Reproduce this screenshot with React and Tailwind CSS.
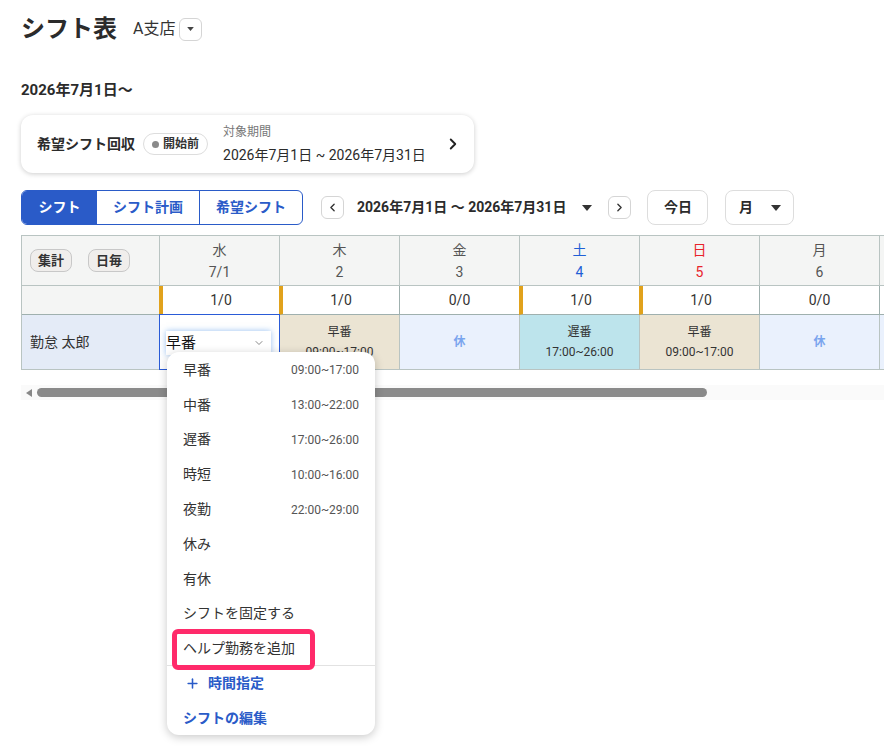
import { ChevronDown, ChevronLeft, ChevronRight, Plus } from "lucide-react"

const days = [
  { w: "水", d: "7/1", color: "text-[#555]", count: "1/0", bar: true },
  { w: "木", d: "2", color: "text-[#555]", count: "1/0", bar: true },
  { w: "金", d: "3", color: "text-[#555]", count: "0/0", bar: false },
  { w: "土", d: "4", color: "text-[#1f5fd6]", count: "1/0", bar: true },
  { w: "日", d: "5", color: "text-[#e8232a]", count: "1/0", bar: true },
  { w: "月", d: "6", color: "text-[#555]", count: "0/0", bar: false },
  // next column is only partly in view, its text lies past the edge
  { w: "", d: "", color: "text-[#555]", count: "", bar: false },
]

const shifts = [
  { type: "select" },
  { type: "shift", name: "早番", time: "09:00~17:00", bg: "bg-[#ebe4d3]" },
  { type: "off" },
  { type: "shift", name: "遅番", time: "17:00~26:00", bg: "bg-[#bde4ec]" },
  { type: "shift", name: "早番", time: "09:00~17:00", bg: "bg-[#ebe4d3]" },
  { type: "off" },
  { type: "blank" },
]

const menuItems = [
  { name: "早番", time: "09:00~17:00" },
  { name: "中番", time: "13:00~22:00" },
  { name: "遅番", time: "17:00~26:00" },
  { name: "時短", time: "10:00~16:00" },
  { name: "夜勤", time: "22:00~29:00" },
  { name: "休み" },
  { name: "有休" },
  { name: "シフトを固定する" },
]

function Caret() {
  return (
    <svg width="10" height="6" viewBox="0 0 10 6" className="fill-[#333]">
      <path d="M0 0h10L5 6z" />
    </svg>
  )
}

export default function App() {
  return (
    <div
      className="min-h-[747px] bg-white pl-[21px] pt-[13px] text-[#222]"
      style={{ fontFamily: 'Roboto, "Noto Sans CJK JP", sans-serif' }}
    >
      {/* title */}
      <div className="flex items-center">
        <h1 className="text-[24px] font-bold leading-8 text-[#2b2b2b]">シフト表</h1>
        <span className="ml-[16px] text-[16px] text-[#333]">A支店</span>
        <button className="ml-[4px] flex h-[23px] w-[23px] items-center justify-center rounded-md border border-[#d5d5d5]">
          <svg width="7" height="4" viewBox="0 0 10 6" className="fill-[#444]">
            <path d="M0 0h10L5 6z" />
          </svg>
        </button>
      </div>

      <div className="mt-[35px] text-[15px] font-bold leading-5 text-[#2b2b2b]">2026年7月1日〜</div>

      {/* collection card */}
      <div className="mt-[15px] flex h-[58px] w-[453px] items-center rounded-xl bg-white pl-[16px] pr-[12px] shadow-[0_1px_5px_rgba(0,0,0,0.2)]">
        <span className="text-[14px] font-bold text-[#2b2b2b]">希望シフト回収</span>
        <span className="ml-[8px] flex h-[22px] items-center gap-[4px] rounded-full border border-[#ddd] px-[8px] text-[12px] font-bold text-[#333]">
          <span className="h-[7px] w-[7px] rounded-full bg-[#8a8a8a]" />
          開始前
        </span>
        <div className="ml-[15px] flex flex-col">
          <span className="text-[12px] leading-4 text-[#777]">対象期間</span>
          <span className="mt-[5px] text-[14px] leading-5 text-[#2b2b2b]">2026年7月1日 ~ 2026年7月31日</span>
        </div>
        <ChevronRight className="ml-auto h-[18px] w-[18px] text-[#222]" strokeWidth={2.5} />
      </div>

      {/* toolbar */}
      <div className="mt-[17px] flex items-center">
        <div className="flex h-[35px] overflow-hidden rounded-md border border-[#2a5bc8] text-[14px] font-bold">
          <button className="w-[75px] bg-[#2a5bc8] text-white">シフト</button>
          <button className="w-[103px] border-r border-[#2a5bc8] text-[#2a5bc8]">シフト計画</button>
          <button className="w-[102px] text-[#2a5bc8]">希望シフト</button>
        </div>
        <button className="ml-[18px] flex h-[23px] w-[23px] items-center justify-center rounded-md border border-[#d5d5d5]">
          <ChevronLeft className="h-[13px] w-[13px] text-[#333]" strokeWidth={2.5} />
        </button>
        <span className="ml-[13px] text-[14px] font-bold text-[#2b2b2b]">2026年7月1日 〜 2026年7月31日</span>
        <span className="ml-[16px]">
          <Caret />
        </span>
        <button className="ml-[16px] flex h-[23px] w-[23px] items-center justify-center rounded-md border border-[#d5d5d5]">
          <ChevronRight className="h-[13px] w-[13px] text-[#333]" strokeWidth={2.5} />
        </button>
        <button className="ml-[16px] flex h-[35px] w-[61px] items-center justify-center rounded-lg border border-[#ddd] text-[14px] font-bold text-[#2b2b2b]">
          今日
        </button>
        <button className="ml-[17px] flex h-[35px] w-[69px] items-center justify-center gap-[18px] rounded-lg border border-[#ddd] text-[14px] font-bold text-[#2b2b2b]">
          月
          <Caret />
        </button>
      </div>

      {/* table */}
      <div className="relative mt-[10px]">
        <div className="overflow-hidden">
          <div className="w-max border-l border-t border-[#b9c4c2]">
            {/* header row */}
            <div className="flex h-[50px] bg-[#f4f5f4]">
              <div className="flex w-[138px] shrink-0 items-center gap-[16px] border-b border-r border-[#b9c4c2] pl-[8px]">
                <span className="flex h-[23px] w-[42px] items-center justify-center rounded-lg border border-[#c8c8c8] bg-[#f0eeec] text-[13px] font-bold text-[#333]">集計</span>
                <span className="flex h-[23px] w-[42px] items-center justify-center rounded-lg border border-[#c8c8c8] bg-[#f0eeec] text-[13px] font-bold text-[#333]">日毎</span>
              </div>
              {days.map((day, i) => (
                <div
                  key={i}
                  className={`flex w-[120px] shrink-0 flex-col items-center justify-center border-b border-r border-[#b9c4c2] text-[14px] leading-[22px] ${day.color}`}
                >
                  <span>{day.w}</span>
                  <span>{day.d}</span>
                </div>
              ))}
            </div>

            {/* count row */}
            <div className="flex h-[29px]">
              <div className="w-[138px] shrink-0 border-b border-r border-[#9fb0ae] bg-[#f4f5f4]" />
              {days.map((day, i) =>
                day.bar ? (
                  <div
                    key={i}
                    className="-ml-px flex w-[121px] shrink-0 items-center justify-center border-b border-l-4 border-r border-[#9fb0ae] border-l-[#e1a21c] bg-white text-[14px] text-[#333]"
                  >
                    {day.count}
                  </div>
                ) : (
                  <div
                    key={i}
                    className="flex w-[120px] shrink-0 items-center justify-center border-b border-r border-[#9fb0ae] bg-white text-[14px] text-[#333]"
                  >
                    {day.count}
                  </div>
                )
              )}
            </div>

            {/* employee row */}
            <div className="flex h-[55px]">
              <div className="flex w-[138px] shrink-0 items-center border-b border-r border-[#b9c4c2] bg-[#e4ebf7] pl-[8px] text-[14px] text-[#333]">
                勤怠 太郎
              </div>
              {shifts.map((s, i) => {
                if (s.type === "select") {
                  return (
                    <div key={i} className="-ml-px -mt-px w-[121px] shrink-0 border border-[#2a5bd7] bg-white pl-[6px] pt-[16px]">
                      <div className="flex h-[24px] w-[105px] items-center justify-between bg-white pr-[6px] text-[15px] text-[#111] shadow-[0_0_6px_rgba(66,140,230,0.55)]">
                        早番
                        <ChevronDown className="h-[12px] w-[12px] text-[#888]" strokeWidth={2} />
                      </div>
                    </div>
                  )
                }
                if (s.type === "off" || s.type === "blank") {
                  return (
                    <div key={i} className="flex w-[120px] shrink-0 items-center justify-center border-b border-r border-[#b9c4c2] bg-[#eaf1fd] text-[12px] font-bold text-[#7aa5ee]">
                      {s.type === "off" ? "休" : ""}
                    </div>
                  )
                }
                return (
                  <div key={i} className={`flex w-[120px] shrink-0 flex-col items-center justify-center border-b border-r border-[#b9c4c2] text-[12px] leading-[20px] text-[#333] ${s.bg}`}>
                    <span>{s.name}</span>
                    <span>{s.time}</span>
                  </div>
                )
              })}
            </div>
          </div>
        </div>

        {/* scrollbar */}
        <div className="mt-[15px] flex h-[15px] items-center bg-[#fafafa]">
          <svg width="6" height="8" viewBox="0 0 6 8" className="ml-[5px] fill-[#888]">
            <path d="M6 0v8L0 4z" />
          </svg>
          <div className="ml-[5px] h-[9px] w-[670px] rounded-full bg-[#8a8a8a]" />
        </div>

        {/* dropdown menu */}
        <div className="absolute left-[146px] top-[117px] z-10 w-[208px] rounded-xl bg-white pt-[1px] shadow-[0_2px_10px_rgba(0,0,0,0.22)]">
          {menuItems.map((m) => (
            <div key={m.name} className="flex h-[34.8px] items-center justify-between pl-[16px] pr-[16px]">
              <span className="text-[14px] text-[#333]">{m.name}</span>
              {m.time && <span className="text-[12px] text-[#555]">{m.time}</span>}
            </div>
          ))}
          <div className="relative flex h-[34px] items-center pl-[16px]">
            <span className="text-[14px] text-[#333]">ヘルプ勤務を追加</span>
            <div className="absolute left-[5px] top-[-2px] h-[41px] w-[143px] rounded-md border-[5px] border-[#ff2a6a]" />
          </div>
          <div className="border-t border-[#e2e2e2]" />
          <div className="flex h-[35px] items-center gap-[8px] pl-[18px] text-[14px] font-bold text-[#2a5bc8]">
            <Plus className="h-[15px] w-[15px]" strokeWidth={2.5} />
            時間指定
          </div>
          <div className="flex h-[34px] items-center pl-[16px] text-[14px] font-bold text-[#2a5bc8]">
            シフトの編集
          </div>
        </div>
      </div>
    </div>
  )
}
